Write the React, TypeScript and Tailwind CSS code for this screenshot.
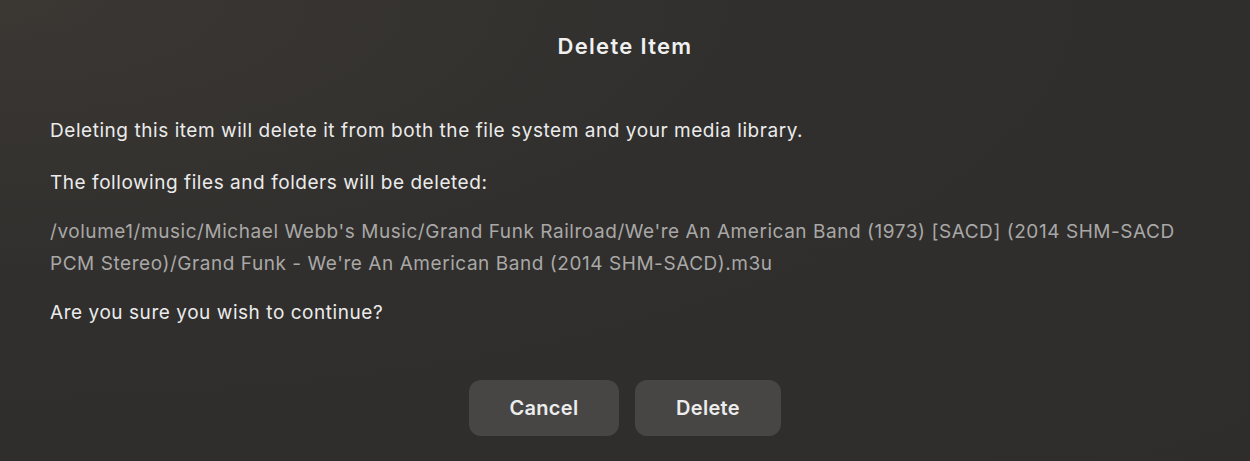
export default function App() {
  return (
    <div className="h-[461px] w-full overflow-hidden bg-[radial-gradient(ellipse_at_top_left,#3b3733_0%,#302f2d_45%,#2e2d2c_100%)] font-['Inter','Liberation_Sans',sans-serif] text-[#ebebeb]">
      <div className="flex flex-col px-[50px]">
        <h1 className="mt-[32px] text-center text-[22px] font-semibold leading-[28px] tracking-[1.3px] text-[#f0f0f0]">
          Delete Item
        </h1>

        <div className="mt-[55px] flex flex-col text-[19px] leading-[32px] tracking-[0.55px]">
          <p>Deleting this item will delete it from both the file system and your media library.</p>
          <p className="mt-[20px]">The following files and folders will be deleted:</p>
          <p className="mt-[17px] text-[#a9a8a7]">
            /volume1/music/Michael Webb's Music/Grand Funk Railroad/We're An American Band (1973) [SACD] (2014 SHM-SACD PCM Stereo)/Grand Funk - We're An American Band (2014 SHM-SACD).m3u
          </p>
          <p className="mt-[17px]">Are you sure you wish to continue?</p>
        </div>

        <div className="mt-[51px] flex justify-center gap-4">
          <button className="h-[56px] w-[150px] rounded-xl bg-[#474645] text-[20px] font-semibold tracking-[0.3px] text-[#ececec]">
            Cancel
          </button>
          <button className="h-[56px] w-[146px] rounded-xl bg-[#474645] text-[20px] font-semibold tracking-[0.3px] text-[#ececec]">
            Delete
          </button>
        </div>
      </div>
    </div>
  );
}
